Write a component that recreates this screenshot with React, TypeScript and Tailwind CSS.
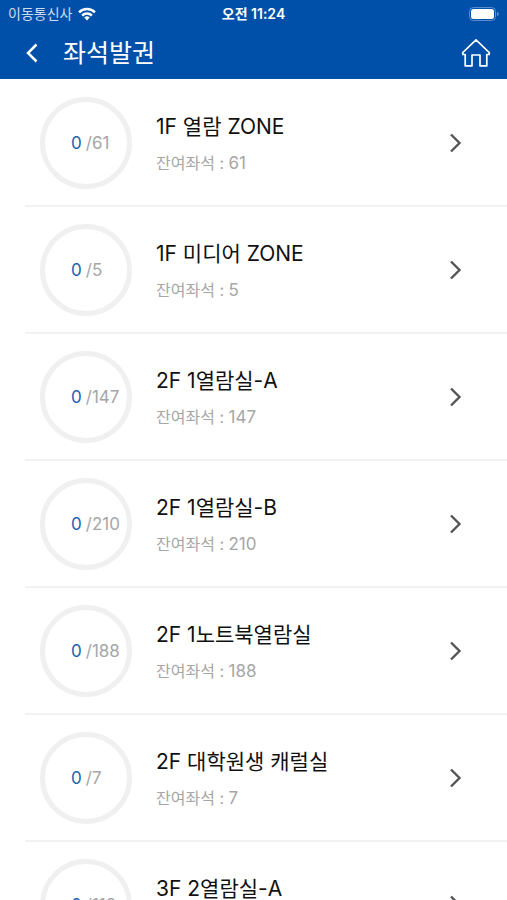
type Room = { name: string; used: number; total: number };

const rooms: Room[] = [
  { name: '1F 열람 ZONE', used: 0, total: 61 },
  { name: '1F 미디어 ZONE', used: 0, total: 5 },
  { name: '2F 1열람실-A', used: 0, total: 147 },
  { name: '2F 1열람실-B', used: 0, total: 210 },
  { name: '2F 1노트북열람실', used: 0, total: 188 },
  { name: '2F 대학원생 캐럴실', used: 0, total: 7 },
  { name: '3F 2열람실-A', used: 0, total: 118 },
];

function WifiIcon() {
  return (
    <svg width="18" height="14" viewBox="0 0 20 15" aria-hidden="true" fill="none" stroke="currentColor" strokeWidth="2.8">
      <path d="M1.200 5.600a12.400 12.400 0 0 1 17.600 0" />
      <path d="M4.600 9.200a7.600 7.600 0 0 1 10.800 0" />
      <path d="M10 14.600 6.900 11.500a4.400 4.400 0 0 1 6.200 0z" fill="currentColor" stroke="none" />
    </svg>
  );
}

function BatteryIcon() {
  return (
    <svg width="30" height="14" viewBox="0 0 30 14" aria-hidden="true">
      <rect x="0.5" y="0.5" width="26" height="13" rx="4" fill="none" stroke="#fff" strokeOpacity="0.35" />
      <rect x="2" y="2" width="23" height="10" rx="2.5" fill="#fff" />
      <path d="M28 5v4c1-.3 1.6-1.100 1.600-2S29 5.300 28 5z" fill="#fff" fillOpacity="0.4" />
    </svg>
  );
}

function StatusBar() {
  return (
    <div className="grid h-[27px] grid-cols-3 items-center px-2 text-sm leading-none">
      <div className="flex items-center gap-1.5">
        <span className="opacity-80">이동통신사</span>
        <WifiIcon />
      </div>
      <span className="text-center font-semibold">오전 11:24</span>
      <div className="flex justify-end">
        <BatteryIcon />
      </div>
    </div>
  );
}

function TitleBar() {
  return (
    <div className="flex h-[52px] items-center pr-4 pl-6">
      <button type="button" aria-label="뒤로" className="flex w-[39px]">
        <svg width="14" height="20" viewBox="0 0 14 20" fill="none" stroke="currentColor" strokeWidth="2.500">
          <path d="M12.500 1.500 4 10l8.500 8.500" />
        </svg>
      </button>
      <h1 className="flex-1 text-[25px] leading-none">좌석발권</h1>
      <button type="button" aria-label="홈">
        <svg width="30" height="30" viewBox="0 0 30 30" fill="none" stroke="currentColor" strokeWidth="1.700" strokeLinejoin="round">
          <path d="M15 1.800 1.800 14.500v2H4.200v11.300h6.800v-10.800h8v10.800h6.800V16.500h2.400v-2z" />
        </svg>
      </button>
    </div>
  );
}

function RoomRow({ room }: { room: Room }) {
  return (
    <li className="ml-[25px] border-b-2 border-[#f2f2f2]">
      <button type="button" className="flex h-[125px] w-full items-center pr-11 pl-[15px] text-left">
        <span className="flex size-[92px] shrink-0 items-center rounded-full border-5 border-[#f0f0f0] pt-0.5 pl-[26px] text-[17px] leading-none text-[#a6a6a6]">
          <span className="text-[#1f5fb8]">{room.used}</span>
          <span className="pl-1">/{room.total}</span>
        </span>
        <span className="ml-6 flex flex-1 flex-col gap-3 pt-1">
          <span className="text-[21px] leading-6 text-[#111]">{room.name}</span>
          <span className="text-base leading-6 text-[#a6a6a6]">
            잔여좌석 : <span className="text-[17px]">{room.total - room.used}</span>
          </span>
        </span>
        <svg width="14" height="22" viewBox="0 0 14 22" aria-hidden="true" fill="none" stroke="#555" strokeWidth="2.400">
          <path d="m2 2.500 8.500 8.500-8.500 8.500" />
        </svg>
      </button>
    </li>
  );
}

export default function App() {
  return (
    <div className="flex h-screen flex-col overflow-hidden bg-white font-['Inter','Noto_Sans_CJK_KR',sans-serif]">
      <header className="shrink-0 bg-[#0050aa] text-white">
        <StatusBar />
        <TitleBar />
      </header>
      <main className="min-h-0 flex-1 overflow-y-auto [scrollbar-width:none]">
        <ul className="pt-px">
          {rooms.map((room) => (
            <RoomRow key={room.name} room={room} />
          ))}
        </ul>
      </main>
    </div>
  );
}
